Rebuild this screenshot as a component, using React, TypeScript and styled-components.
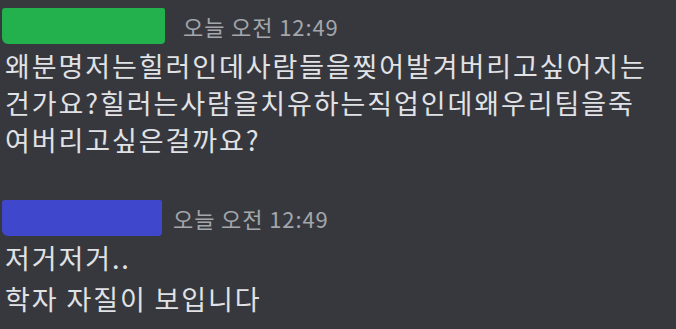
import React from "react";
import styled, { createGlobalStyle } from "styled-components";

const colors = {
  background: "#36383e",
  text: "#e1e2e5",
  muted: "#a3a6ab",
  green: "#22b14c",
  blue: "#3f48cc",
};

const GlobalStyle = createGlobalStyle`
  html, body {
    margin: 0;
    padding: 0;
    background: ${colors.background};
  }
  body {
    font-family: "Noto Sans CJK KR", "Noto Sans", sans-serif;
  }
`;

const Page = styled.div`
  width: 676px;
  height: 329px;
  overflow: hidden;
  background: ${colors.background};
  padding: 5px 0 0 5px;
  box-sizing: border-box;
  display: flex;
  flex-direction: column;
`;

const Message = styled.div<{ $gapTop?: number }>`
  display: flex;
  flex-direction: column;
  margin-top: ${(p) => p.$gapTop || 0}px;
`;

const Header = styled.div`
  height: 42px;
  display: flex;
  align-items: center;
  margin-left: -3px;
`;

// hand painted block hiding the user name
const NameCover = styled.div<{ $color: string; $width: number }>`
  width: ${(p) => p.$width}px;
  height: 36px;
  background: ${(p) => p.$color};
  border-radius: 3px 2px 4px 6px;
`;

const Timestamp = styled.span<{ $gap: number }>`
  margin-left: ${(p) => p.$gap}px;
  color: ${colors.muted};
  font-size: 22px;
  letter-spacing: 0.9px;
  white-space: nowrap;
`;

const Line = styled.div<{ $spaced?: boolean }>`
  color: ${colors.text};
  font-size: 27px;
  letter-spacing: 1.9px;
  line-height: 37px;
  white-space: nowrap;
  margin-top: ${(p) => (p.$spaced ? 4 : 0)}px;
`;

const App = () => {
  return (
    <>
      <GlobalStyle />
      <Page>
        <Message>
          <Header>
            <NameCover $color={colors.green} $width={163} />
            <Timestamp $gap={18}>오늘 오전 12:49</Timestamp>
          </Header>
          <Line>왜분명저는힐러인데사람들을찢어발겨버리고싶어지는</Line>
          <Line>건가요?힐러는사람을치유하는직업인데왜우리팀을죽</Line>
          <Line>여버리고싶은걸까요?</Line>
        </Message>
        <Message $gapTop={39}>
          <Header>
            <NameCover $color={colors.blue} $width={160} />
            <Timestamp $gap={11}>오늘 오전 12:49</Timestamp>
          </Header>
          <Line>저거저거..</Line>
          <Line $spaced>학자 자질이 보입니다</Line>
        </Message>
      </Page>
    </>
  );
};

export default App;
